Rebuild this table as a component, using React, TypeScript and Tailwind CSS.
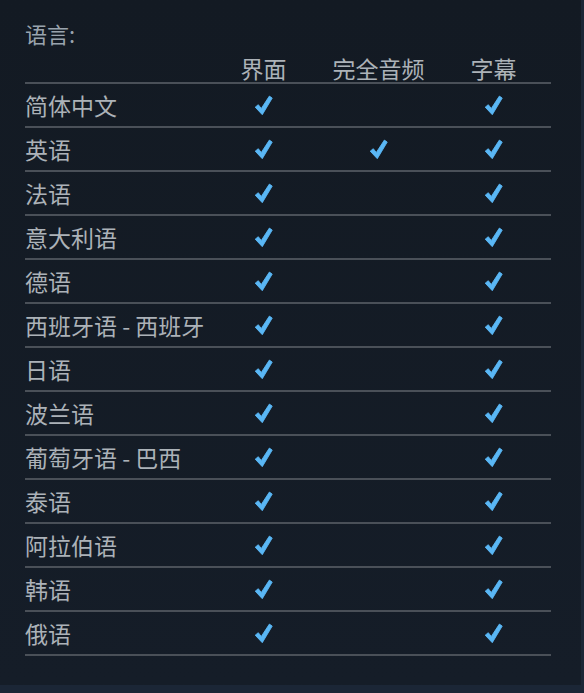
const languages: { name: string; ui: boolean; audio: boolean; subs: boolean }[] = [
  { name: "简体中文", ui: true, audio: false, subs: true },
  { name: "英语", ui: true, audio: true, subs: true },
  { name: "法语", ui: true, audio: false, subs: true },
  { name: "意大利语", ui: true, audio: false, subs: true },
  { name: "德语", ui: true, audio: false, subs: true },
  { name: "西班牙语 - 西班牙", ui: true, audio: false, subs: true },
  { name: "日语", ui: true, audio: false, subs: true },
  { name: "波兰语", ui: true, audio: false, subs: true },
  { name: "葡萄牙语 - 巴西", ui: true, audio: false, subs: true },
  { name: "泰语", ui: true, audio: false, subs: true },
  { name: "阿拉伯语", ui: true, audio: false, subs: true },
  { name: "韩语", ui: true, audio: false, subs: true },
  { name: "俄语", ui: true, audio: false, subs: true },
];

function Check() {
  return (
    <svg width="19" height="21" viewBox="0 0 17 19" className="block">
      <path
        d="M1 11 L3.8 8.8 L6.5 12.2 L13.8 1 L16.4 2.8 L7.4 17.8 Z"
        fill="#5ab7f5"
        stroke="#5ab7f5"
        strokeWidth="0.8"
        strokeLinejoin="round"
      />
    </svg>
  );
}

function Cell({ on }: { on: boolean }) {
  return (
    <div className="flex h-full items-center justify-center border-b-2 border-[#4a5058]">
      {on && <Check />}
    </div>
  );
}

export default function App() {
  return (
    <div
      className="h-[693px] w-[584px] bg-[#1b2636] text-[#acb2b8]"
      style={{ fontFamily: '"Noto Sans CJK SC", "Noto Sans", sans-serif' }}
    >
      <div className="h-[685px] w-[581px] bg-gradient-to-b from-[#131a23] to-[#151d28] pl-[25px] pt-[19px]">
        {/* Title */}
        <div className="text-[22px] leading-[28px] text-[#9aa3ad]">语言:</div>

        {/* Table */}
        <div className="mt-[7px] grid w-[526px] grid-cols-[181px_115px_115px_115px] text-[23px]">
          <div className="h-[30px] border-b-2 border-[#4a5058]" />
          <div className="flex h-[30px] items-center justify-center border-b-2 border-[#4a5058] leading-none">界面</div>
          <div className="flex h-[30px] items-center justify-center border-b-2 border-[#4a5058] leading-none">完全音频</div>
          <div className="flex h-[30px] items-center justify-center border-b-2 border-[#4a5058] leading-none">字幕</div>

          {languages.map((l) => (
            <div key={l.name} className="contents">
              <div className="flex h-[44px] items-center whitespace-nowrap border-b-2 border-[#4a5058] leading-none">
                {l.name}
              </div>
              <div className="h-[44px]"><Cell on={l.ui} /></div>
              <div className="h-[44px]"><Cell on={l.audio} /></div>
              <div className="h-[44px]"><Cell on={l.subs} /></div>
            </div>
          ))}
        </div>
      </div>
    </div>
  );
}
